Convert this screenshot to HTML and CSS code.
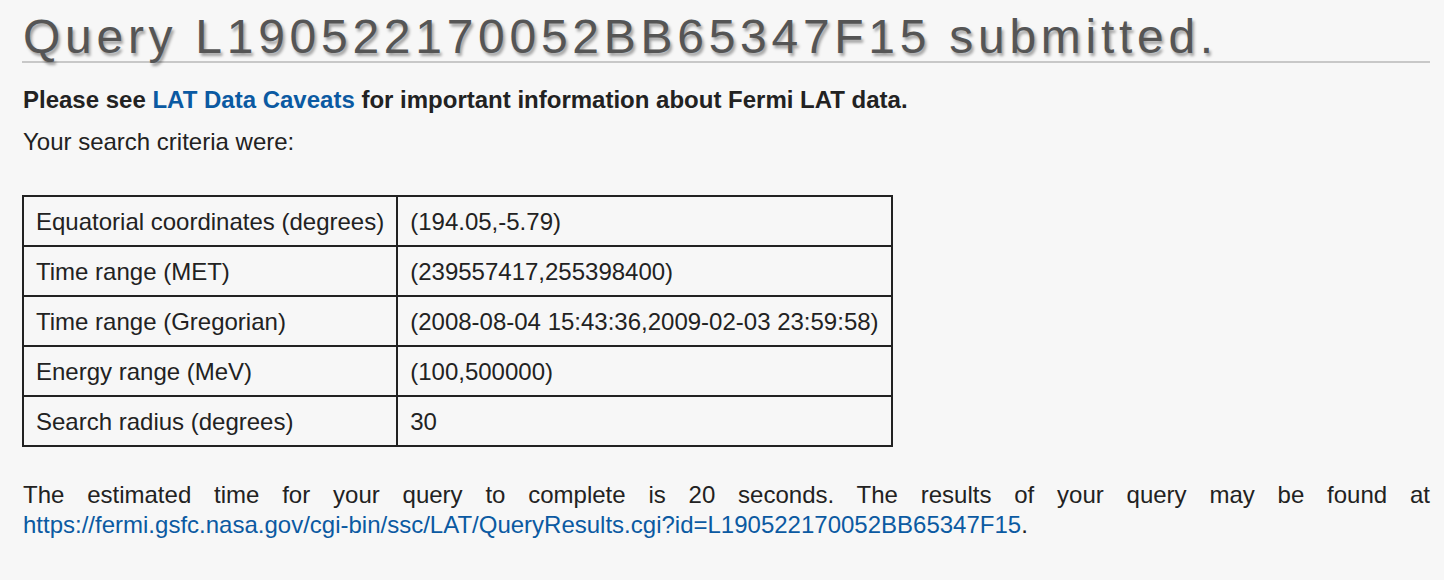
FILE: index.html
```html
<!DOCTYPE html>
<html>
<head>
<meta charset="utf-8">
<link rel="stylesheet" href="styles.css">
</head>
<body>
<div class="page">
  <h1 class="title">Query L190522170052BB65347F15 submitted.</h1>
  <p class="caveat">Please see <a href="#">LAT Data Caveats</a> for important information about Fermi LAT data.</p>
  <p class="intro">Your search criteria were:</p>
  <table class="criteria">
    <tr><td class="label">Equatorial coordinates (degrees)</td><td>(194.05,-5.79)</td></tr>
    <tr><td class="label">Time range (MET)</td><td>(239557417,255398400)</td></tr>
    <tr><td class="label">Time range (Gregorian)</td><td>(2008-08-04 15:43:36,2009-02-03 23:59:58)</td></tr>
    <tr><td class="label">Energy range (MeV)</td><td>(100,500000)</td></tr>
    <tr><td class="label">Search radius (degrees)</td><td>30</td></tr>
  </table>
  <p class="result">The estimated time for your query to complete is 20 seconds. The results of your query may be found at <a href="#">https://fermi.gsfc.nasa.gov/cgi-bin/ssc/LAT/QueryResults.cgi?id=L190522170052BB65347F15</a>.</p>
</div>
</body>
</html>
```

FILE: styles.css
```css
html, body {
  margin: 0;
  padding: 0;
  background: #f7f7f7;
}
body {
  font-family: "Liberation Sans", Arial, Helvetica, sans-serif;
  color: #222;
  font-size: 24px;
}
.page {
  padding: 0 14px 0 22px;
}
.title {
  margin: 0;
  padding-top: 12px;
  font-size: 48px;
  font-weight: normal;
  letter-spacing: 4.72px;
  color: #555;
  line-height: 49px;
  text-shadow: 2px 3px 3px rgba(0,0,0,0.35);
  border-bottom: 2px solid #c8c8c8;
  padding-left: 1px;
}
a {
  color: #0b5aa2;
  text-decoration: none;
}
.caveat {
  font-weight: bold;
  margin: 22px 0 0 1px;
  line-height: 30px;
}
.intro {
  margin: 12px 0 0 1px;
  line-height: 30px;
}
.criteria {
  margin-top: 38px;
  border-collapse: collapse;
  border: 2px solid #222;
}
.criteria td {
  border: 2px solid #222;
  padding: 11px 12px 9px 12px;
  line-height: 28px;
  white-space: nowrap;
}
.result {
  margin: 33px 0 0 1px;
  line-height: 30px;
  text-align: justify;
}
```
